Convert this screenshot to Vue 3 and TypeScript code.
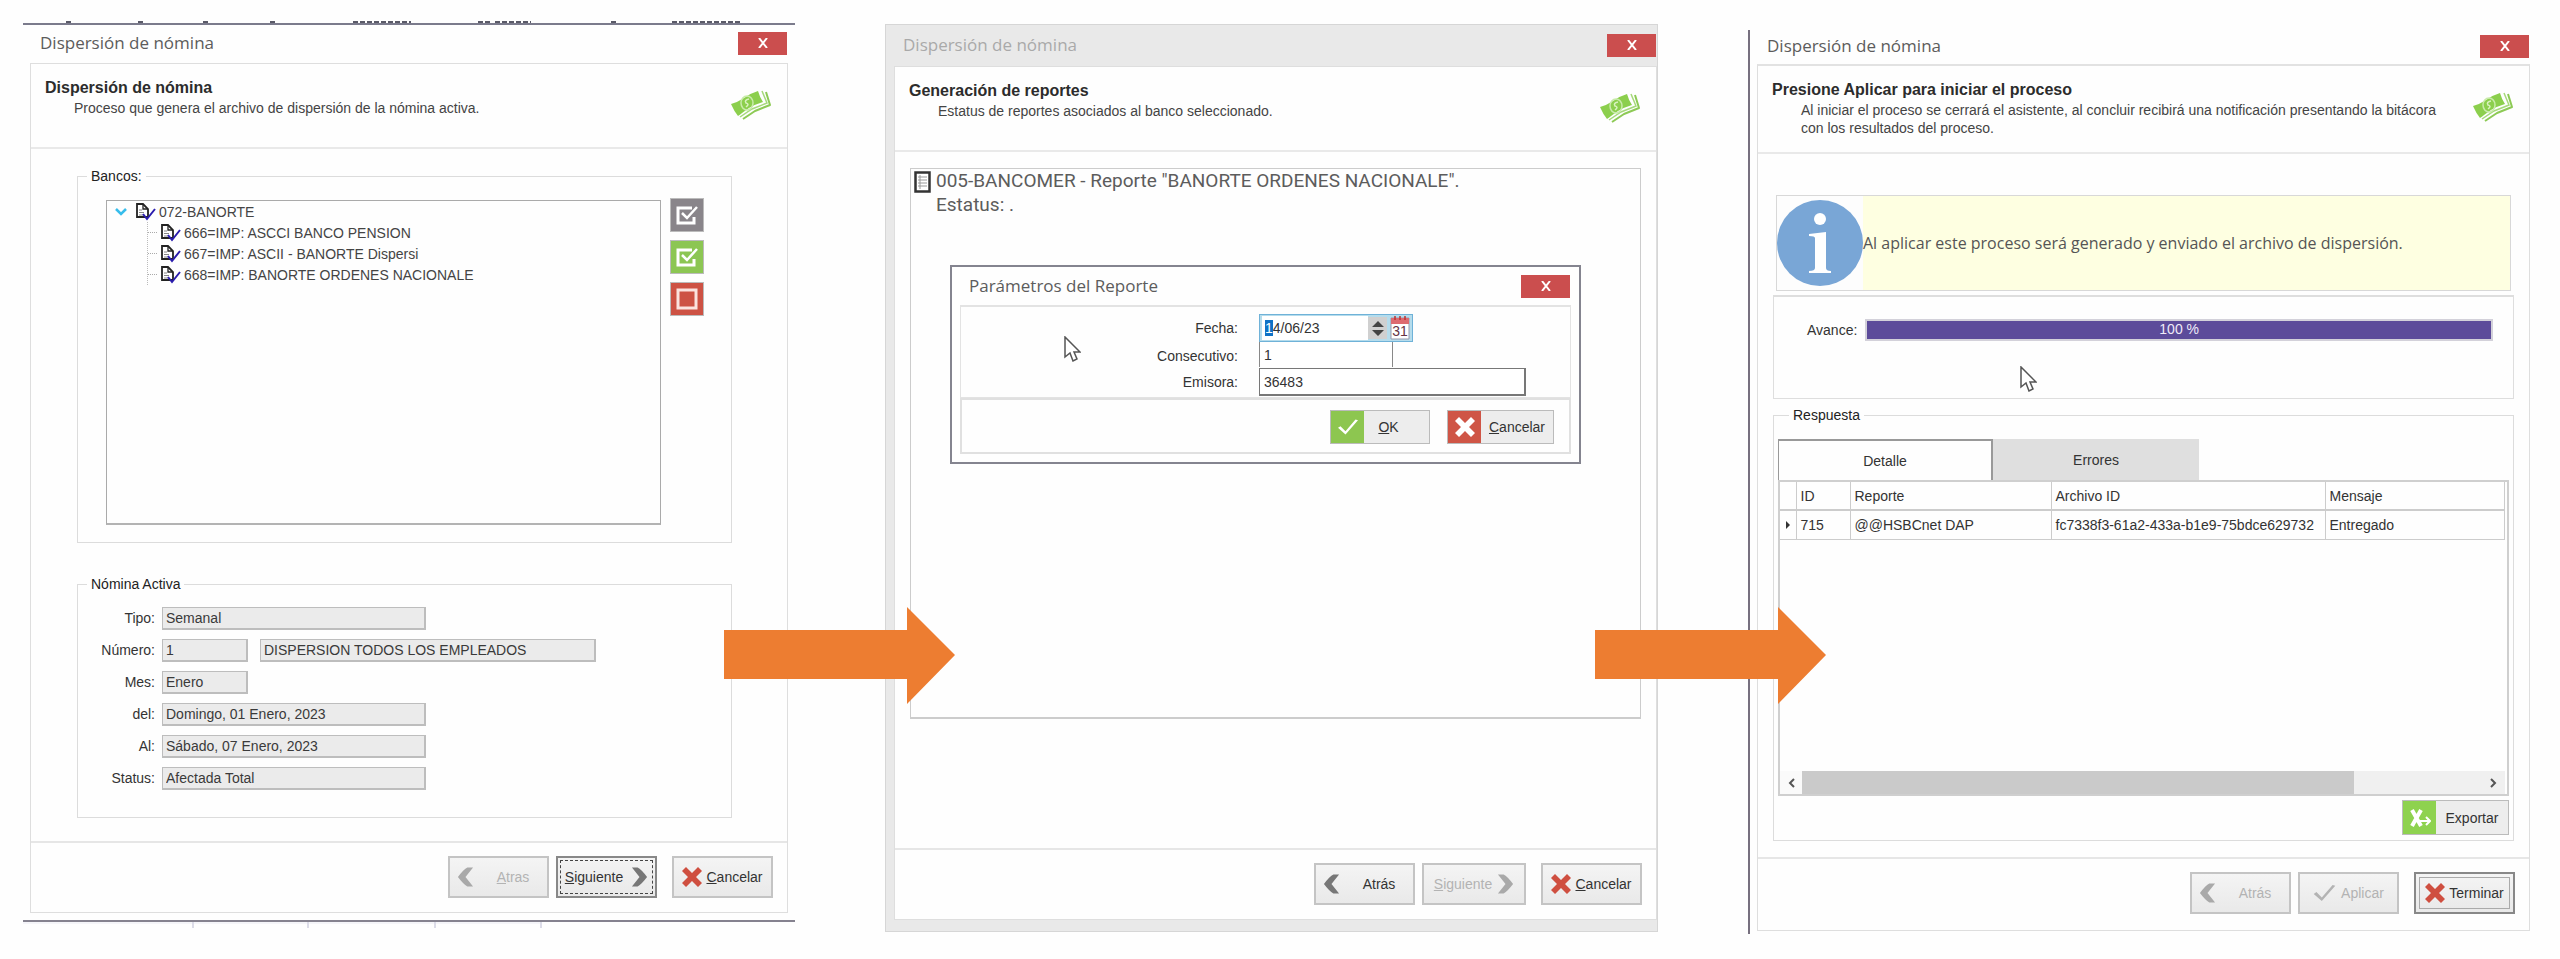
<script setup lang="ts">
import { onMounted, ref } from 'vue'

interface Field { id: string; label: string; value: string; short?: boolean; extra?: string }

const reports: string[] = [
  '666=IMP: ASCCI BANCO PENSION',
  '667=IMP: ASCII - BANORTE Dispersi',
  '668=IMP: BANORTE ORDENES NACIONALE',
]

const fields: Field[] = [
  { id: 'tipo', label: 'Tipo:', value: 'Semanal' },
  { id: 'numero', label: 'Número:', value: '1', short: true, extra: 'DISPERSION TODOS LOS EMPLEADOS' },
  { id: 'mes', label: 'Mes:', value: 'Enero', short: true },
  { id: 'del', label: 'del:', value: 'Domingo, 01 Enero, 2023' },
  { id: 'al', label: 'Al:', value: 'Sábado, 07 Enero, 2023' },
  { id: 'status', label: 'Status:', value: 'Afectada Total' },
]

const fecha = ref('14/06/23')
const consecutivo = ref('1')
const emisora = ref('36483')
const progress = 100
const dateInput = ref<HTMLInputElement | null>(null)

onMounted(() => {
  dateInput.value?.focus({ preventScroll: true })
  dateInput.value?.setSelectionRange(0, 1)
})
</script>

<template>
  <svg class="defs" width="0" height="0" aria-hidden="true">
    <symbol id="money" viewBox="0 0 42 30">
      <path d="M13 29 L25 21 L40 15 L36 2" fill="none" stroke="#8dca55" stroke-width="2" stroke-linejoin="round" />
      <path d="M10 27 L22 19 L37 13 L32 1" fill="none" stroke="#a6d97a" stroke-width="1.500" />
      <path d="M1 14 Q8 12 14 8 Q21 3 28 1 Q30 8 33 12 Q26 14 19 18 Q12 23 8 26 Q4 21 1 14 Z" fill="#8ccf4d" />
      <ellipse cx="17" cy="13" rx="6" ry="7" fill="none" stroke="#c9ebab" stroke-width="1.500" />
      <path d="M19 9 Q14 10 16 13 Q20 14 16 17" stroke="#d9f2bf" stroke-width="1.500" fill="none" />
    </symbol>
    <symbol id="doc" viewBox="0 0 21 20">
      <path d="M2 2 H8 L13 7 V15 H2 Z" fill="#fff" stroke="#222" stroke-width="1.8" />
      <path d="M8 2 V7 H13" fill="none" stroke="#222" stroke-width="1.3" />
      <path d="M4 8 H7 M4 10.500 H9 M4 13 H8" stroke="#888" stroke-width="1" />
      <path d="M8 12 L12 17 L20 7" fill="none" stroke="#2a1cae" stroke-width="2" />
    </symbol>
    <symbol id="boxcheck" viewBox="0 0 34 34">
      <path d="M22 10 H8 V25 H24 V19" fill="none" stroke="#fff" stroke-width="3" />
      <path d="M12 15 L17 20 L27 9" fill="none" stroke="#fff" stroke-width="2.500" />
    </symbol>
    <symbol id="boxempty" viewBox="0 0 34 34">
      <rect x="8" y="8" width="18" height="18" fill="none" stroke="#fbe3df" stroke-width="3" />
    </symbol>
    <symbol id="back" viewBox="0 0 18 20">
      <path d="M11 0 H17 L9 10 L17 20 H11 Q7 18 1 10 Q7 2 11 0 Z" fill="currentColor" />
    </symbol>
    <symbol id="next" viewBox="0 0 18 20">
      <path d="M7 0 H1 L9 10 L1 20 H7 Q11 18 17 10 Q11 2 7 0 Z" fill="currentColor" />
    </symbol>
    <symbol id="cross" viewBox="0 0 20 20">
      <path d="M4 0 L10 6 L16 0 L20 4 L14 10 L20 16 L16 20 L10 14 L4 20 L0 16 L6 10 L0 4 Z" fill="currentColor" />
    </symbol>
    <symbol id="tick" viewBox="0 0 24 20">
      <path d="M0 11 L3 9 L9 15 L21 1 L24 2 L9 19 Z" fill="currentColor" />
    </symbol>
    <symbol id="close" viewBox="0 0 10 10">
      <path d="M1 0 L9 10 M9 0 L1 10" stroke="currentColor" stroke-width="2" />
    </symbol>
    <symbol id="cursor" viewBox="0 0 17 26">
      <path d="M1 1 V21 L6 17 L9 25 L13 23 L10 16 H16 Z" fill="#fff" stroke="#555" stroke-width="1.500" />
    </symbol>
    <symbol id="flow" viewBox="0 0 231 97" preserveAspectRatio="none">
      <path d="M0 23 H183 V0 L231 48 L183 97 V72 H0 Z" fill="#ed7d31" />
    </symbol>
  </svg>

  <main class="page">
    <section class="window first">
      <svg class="scrap" viewBox="0 0 772 3" preserveAspectRatio="none" aria-hidden="true">
        <path d="M43 2 h6 M115 2 h6 M180 2 h6 M247 2 h6 M330 2 h58 M455 2 h14 M472 2 h36 M588 2 h6 M649 2 h68" stroke="#5a5a68" stroke-width="2" stroke-dasharray="5 2" />
      </svg>
      <header class="titlebar">
        <h1>Dispersión de nómina</h1>
        <button class="close" aria-label="Cerrar"><svg><use href="#close" /></svg></button>
      </header>
      <div class="frame">
        <div class="intro">
          <div class="intro-text">
            <h2>Dispersión de nómina</h2>
            <p>Proceso que genera el archivo de dispersión de la nómina activa.</p>
          </div>
          <svg class="money"><use href="#money" /></svg>
        </div>
        <div class="body">
          <fieldset>
            <legend>Bancos:</legend>
            <div class="banks">
              <div class="tree">
                <div class="node">
                  <svg class="chev" viewBox="0 0 12 8"><path d="M1 1 L6 6 L11 1" fill="none" stroke="#37bdec" stroke-width="2.500" /></svg>
                  <svg class="doc"><use href="#doc" /></svg>
                  <span>072-BANORTE</span>
                </div>
                <ul>
                  <li v-for="r in reports" :key="r"><svg class="doc"><use href="#doc" /></svg><span>{{ r }}</span></li>
                </ul>
              </div>
              <div class="tools">
                <button class="gray" aria-label="Invertir selección"><svg><use href="#boxcheck" /></svg></button>
                <button class="green" aria-label="Seleccionar todos"><svg><use href="#boxcheck" /></svg></button>
                <button class="red" aria-label="Quitar selección"><svg><use href="#boxempty" /></svg></button>
              </div>
            </div>
          </fieldset>
          <fieldset class="active">
            <legend>Nómina Activa</legend>
            <div class="details">
              <template v-for="f in fields" :key="f.id">
                <label :for="f.id">{{ f.label }}</label>
                <div class="values">
                  <input :id="f.id" :class="{ short: f.short }" :value="f.value" readonly />
                  <input v-if="f.extra" class="wide" :value="f.extra" aria-label="Descripción" readonly />
                </div>
              </template>
            </div>
          </fieldset>
        </div>
        <footer>
          <button class="btn" disabled><svg class="ic"><use href="#back" /></svg><span class="mid"><u>A</u>tras</span></button>
          <button class="btn focused"><span><u>S</u>iguiente</span><svg class="ic"><use href="#next" /></svg></button>
          <button class="btn last"><svg class="x"><use href="#cross" /></svg><span><u>C</u>ancelar</span></button>
        </footer>
      </div>
      <svg class="underticks" viewBox="0 0 772 6" preserveAspectRatio="none" aria-hidden="true">
        <path d="M0 1 H518" stroke="#ececf4" /><path d="M170 0 V6 M285 0 V6 M412 0 V6 M518 0 V6" stroke="#dcdce8" stroke-width="2" />
      </svg>
      <svg class="flow"><use href="#flow" /></svg>
    </section>

    <section class="window second">
      <header class="titlebar">
        <h1>Dispersión de nómina</h1>
        <button class="close" aria-label="Cerrar"><svg><use href="#close" /></svg></button>
      </header>
      <div class="frame">
        <div class="intro">
          <div class="intro-text">
            <h2>Generación de reportes</h2>
            <p>Estatus de reportes asociados al banco seleccionado.</p>
          </div>
          <svg class="money"><use href="#money" /></svg>
        </div>
        <div class="body">
          <div class="log">
            <svg class="sheet" viewBox="0 0 17 22">
              <rect x="1.500" y="1.500" width="14" height="19" fill="#fff" stroke="#333" stroke-width="2.500" />
              <path d="M4 6 H13 M4 9 H13 M4 12 H13 M4 15 H13 M6 4 V18" stroke="#999" />
            </svg>
            <div>005-BANCOMER - Reporte "BANORTE ORDENES NACIONALE".<br />Estatus: .</div>
            <div class="dialog" role="dialog" aria-label="Parámetros del Reporte">
              <header class="titlebar">
                <h1>Parámetros del Reporte</h1>
                <button class="close" aria-label="Cerrar"><svg><use href="#close" /></svg></button>
              </header>
              <div class="params">
                <label for="fecha">Fecha:</label>
                <div class="date">
                  <input id="fecha" ref="dateInput" v-model="fecha" />
                  <button class="spin" aria-label="Cambiar fecha"><svg viewBox="0 0 18 22"><path d="M3 10 L9 4 L15 10 Z M3 13 L9 19 L15 13 Z" fill="#444" /></svg></button>
                  <button class="cal" aria-label="Calendario">
                    <svg viewBox="0 0 20 24"><path d="M1 2 H19 V23 H1 Z" fill="#fff" stroke="#99a" /><path d="M1 2 H19 V8 H1 Z" fill="#dd6a70" /><path d="M5 0 V4 M10 0 V4 M15 0 V4" stroke="#b33" stroke-width="1.500" /></svg>
                    <span>31</span>
                  </button>
                </div>
                <label for="consecutivo">Consecutivo:</label>
                <input id="consecutivo" v-model="consecutivo" class="cons" />
                <label for="emisora">Emisora:</label>
                <input id="emisora" v-model="emisora" class="emi" />
              </div>
              <div class="actions">
                <button class="tile ok"><i><svg><use href="#tick" /></svg></i><span><u>O</u>K</span></button>
                <button class="tile no"><i><svg><use href="#cross" /></svg></i><span><u>C</u>ancelar</span></button>
              </div>
              <svg class="cursor"><use href="#cursor" /></svg>
            </div>
          </div>
        </div>
        <footer>
          <button class="btn"><svg class="ic"><use href="#back" /></svg><span class="mid">Atrás</span></button>
          <button class="btn forward" disabled><span><u>S</u>iguiente</span><svg class="ic"><use href="#next" /></svg></button>
          <button class="btn last"><svg class="x"><use href="#cross" /></svg><span><u>C</u>ancelar</span></button>
        </footer>
      </div>
      <svg class="flow"><use href="#flow" /></svg>
    </section>

    <section class="window third">
      <header class="titlebar">
        <h1>Dispersión de nómina</h1>
        <button class="close" aria-label="Cerrar"><svg><use href="#close" /></svg></button>
      </header>
      <div class="frame">
        <div class="intro">
          <div class="intro-text">
            <h2>Presione Aplicar para iniciar el proceso</h2>
            <p>Al iniciar el proceso se cerrará el asistente, al concluir recibirá una notificación presentando la bitácora con los resultados del proceso.</p>
          </div>
          <svg class="money"><use href="#money" /></svg>
        </div>
        <div class="body">
          <div class="notice">
            <div class="badge">
              <svg viewBox="0 0 86 86"><circle cx="43" cy="43" r="43" fill="#79a6d6" /><circle cx="43" cy="19" r="6" fill="#fff" /><path d="M32 34 L49 32 V68 Q49 71 54 71 V73 H32 V71 Q38 71 38 68 V38 Q38 36 32 36 Z" fill="#fff" /></svg>
            </div>
            <p>Al aplicar este proceso será generado y enviado el archivo de dispersión.</p>
          </div>
          <div class="advance">
            <span id="avance">Avance:</span>
            <div class="bar" role="progressbar" aria-labelledby="avance" :aria-valuenow="progress">
              <div class="fill" :style="{ width: progress + '%' }">{{ progress }} %</div>
            </div>
            <svg class="cursor"><use href="#cursor" /></svg>
          </div>
          <fieldset>
            <legend>Respuesta</legend>
            <div class="answer">
              <div class="tabs" role="tablist">
                <button role="tab" aria-selected="true" class="on">Detalle</button>
                <button role="tab" aria-selected="false">Errores</button>
              </div>
              <div class="grid">
                <table>
                  <colgroup><col class="c0" /><col class="c1" /><col class="c2" /><col class="c3" /><col /></colgroup>
                  <thead><tr><th></th><th>ID</th><th>Reporte</th><th>Archivo ID</th><th>Mensaje</th></tr></thead>
                  <tbody>
                    <tr>
                      <td class="mark"><svg viewBox="0 0 4 8"><path d="M0 0 L4 4 L0 8 Z" fill="#333" /></svg></td>
                      <td>715</td><td>@@HSBCnet DAP</td><td>fc7338f3-61a2-433a-b1e9-75bdce629732</td><td>Entregado</td>
                    </tr>
                  </tbody>
                </table>
                <div class="scroll">
                  <button aria-label="Desplazar a la izquierda"><svg viewBox="0 0 8 12"><path d="M7 2 L3 6 L7 10" fill="none" stroke="#555" stroke-width="2" /></svg></button>
                  <div class="track"><div class="thumb"></div></div>
                  <button aria-label="Desplazar a la derecha"><svg viewBox="0 0 8 12"><path d="M1 2 L5 6 L1 10" fill="none" stroke="#555" stroke-width="2" /></svg></button>
                </div>
              </div>
              <button class="tile export"><i><svg viewBox="0 0 22 20"><path d="M3 2 L12 18 M12 2 L3 18" stroke="#fff" stroke-width="4" /><path d="M11 13 H20 M17 9 L21 13 L17 17" fill="none" stroke="#fff" stroke-width="2" /></svg></i><span>Exportar</span></button>
            </div>
          </fieldset>
        </div>
        <footer>
          <button class="btn" disabled><svg class="ic"><use href="#back" /></svg><span class="mid">Atrás</span></button>
          <button class="btn" disabled><svg class="tk"><use href="#tick" /></svg><span>Aplicar</span></button>
          <button class="btn last default"><svg class="x"><use href="#cross" /></svg><span>Terminar</span></button>
        </footer>
      </div>
    </section>
  </main>
</template>

<style>
body { margin: 0; background: #fefefe; }
</style>

<style scoped>
* { box-sizing: border-box; }
.defs { position: absolute; }
.page {
  display: grid;
  grid-template-columns: 772fr 773fr 782fr;
  column-gap: 90px;
  align-items: start;
  padding: 23px 30px 25px 23px;
  font: 14px/20px "Liberation Sans", Arial, sans-serif;
  color: #333;
}
button, input { font: inherit; color: inherit; margin: 0; padding: 0; border: 0; border-radius: 0; }
button { display: flex; align-items: center; justify-content: center; }
svg { display: block; flex: none; }
h1, h2, p, ul { margin: 0; padding: 0; }
.window { position: relative; min-width: 0; }
.titlebar { display: flex; align-items: center; justify-content: space-between; }
.titlebar h1 { font: 400 17px/24px "Open Sans", sans-serif; color: #5c5c5c; }
.close { width: 49px; height: 23px; background: #cb4e4e; color: #fff; }
.close svg { width: 10px; height: 10px; }
.frame { border: 1px solid #dedede; background: #fefefe; }
.intro { display: flex; justify-content: space-between; border-bottom: 2px solid #e9e9e9; }
.intro-text { padding: 14px 0 0 14px; }
.intro h2 { font: 700 16px/20px "Liberation Sans", Arial, sans-serif; color: #2c2c2c; }
.intro p { padding-left: 29px; line-height: 18px; margin-top: 1px; color: #444; }
.money { width: 42px; height: 30px; margin: 26px 15px 0 0; }
footer { display: flex; justify-content: flex-end; gap: 7px; padding: 13px 14px 14px 0; border-top: 2px solid #e6e6e6; }

.first { border-top: 2px solid #7b7b8c; border-bottom: 2px solid #85828f; }
.first .titlebar { height: 38px; padding: 0 8px 2px 17px; }
.first .frame { margin: 0 7px 7px; }
.first .intro { height: 85px; }
.first .body { padding: 17px 55px 23px 46px; }
.second { margin-top: 1px; background: #e9e9e9; border: 1px solid #d6d6d6; }
.second > .titlebar { height: 41px; padding: 0 1px 1px 17px; }
.second > .titlebar h1 { color: #a9a9a9; }
.second .frame { margin: 0 0 11px 8px; }
.second .intro { height: 85px; }
.second .body { padding: 16px 15px 129px; }
.third { margin-top: 7px; border-left: 2px solid #77707f; padding-bottom: 3px; }
.third .titlebar { height: 34px; padding: 0 1px 2px 17px; }
.third .frame { margin-left: 7px; border-top: 2px solid #e2e2e2; }
.third .intro { height: 88px; }
.third .intro-text { flex: 1; max-width: 704px; }
.third .body { padding: 41px 15px 16px; }
.third footer { padding-bottom: 16px; }

.scrap { position: absolute; left: 0; top: -5px; width: 100%; height: 3px; }
.underticks { position: absolute; left: 0; top: 100%; width: 100%; height: 6px; margin-top: 2px; }
.flow { position: absolute; right: -160px; top: 582px; width: 231px; height: 97px; z-index: 3; }
.second .flow { right: -169px; }

fieldset { position: relative; min-width: 0; margin: 0; padding: 0; border: 1px solid #dcdcdc; }
legend { margin-left: 9px; padding: 0 4px; line-height: 20px; color: #222; }
.active { margin-top: 31px; }
.banks { display: flex; gap: 9px; padding: 12px 27px 17px 28px; }
.tree { flex: 1; min-height: 325px; margin-top: 2px; border: 1px solid #aaa; border-bottom: 2px solid #b3b3b3; color: #444; }
.node, .tree li { display: flex; align-items: center; height: 21px; gap: 3px; }
.node { padding-left: 8px; }
.chev { width: 12px; height: 8px; margin-right: 5px; }
.doc { width: 21px; height: 20px; }
.tree ul { margin-left: 40px; border-left: 1px dotted #bbb; list-style: none; }
.tree li::before { content: ""; width: 9px; border-top: 1px dotted #aaa; }
.tools { display: flex; flex-direction: column; gap: 8px; }
.tools button { width: 34px; height: 34px; border: 1px solid #bbb; }
.tools svg { width: 34px; height: 34px; }
.gray { background: #89858a; }
.green { background: #8cc653; }
.red { background: #cd5244; }

.details { display: grid; grid-template-columns: 77px 1fr; gap: 9px 7px; padding: 13px 0 27px; }
.details label { text-align: right; line-height: 23px; }
.values { display: flex; gap: 12px; }
.values input { width: 264px; height: 23px; padding: 0 3px; border: 2px solid #bdbdbd; border-width: 1px 2px 2px 1px; background: #ebebeb; color: #3a3a3a; }
.values .short { width: 86px; }
.values .wide { width: 336px; }

.btn { gap: 5px; width: 101px; height: 42px; border: 2px solid #c4c4c4; background: linear-gradient(#f4f4f4, #e9e9e9); color: #333; }
.btn .ic { width: 17px; height: 20px; color: #777; }
.btn .mid { flex: 1; text-align: center; }
.btn > .ic:first-child { margin-left: 7px; }
.btn .tk { width: 23px; height: 18px; }
.btn .x { width: 20px; height: 20px; color: #cf4f40; }
.btn:disabled { color: #b3b3b3; }
.btn:disabled .ic { color: #a9a9a9; }
.btn.last { margin-left: 8px; gap: 4px; }
.forward { width: 104px; }
.btn.focused { position: relative; gap: 8px; border-color: #888; }
.btn.focused::after { content: ""; position: absolute; inset: 2px; border: 1px dashed #444; }
.default { border: 2px solid #888; outline: 1px solid #aaa; outline-offset: -6px; }

.log { position: relative; display: flex; gap: 5px; min-height: 551px; padding: 0 3px; border: 1px solid #ccc; border-bottom-width: 2px; font: 400 19px/24px Roboto, sans-serif; color: #5c5c5c; }
.sheet { width: 17px; height: 22px; margin-top: 2px; }
.dialog { position: absolute; left: 39px; right: 59px; top: 96px; border: 2px solid #84848f; background: #fefefe; font: 14px/20px "Liberation Sans", Arial, sans-serif; color: #333; }
.dialog .titlebar { height: 38px; padding: 0 9px 0 17px; }
.params { display: grid; grid-template-columns: 277px 1fr; column-gap: 21px; margin: 0 8px; height: 93px; padding-top: 7px; border: 1px solid #e3e3e3; border-top-width: 2px; align-content: start; }
.params label { text-align: right; line-height: 26px; padding-top: 1px; height: 26px; }
.params input { height: 26px; padding: 0 4px; background: #fff; outline: 0; }
.date { display: flex; align-items: center; width: 154px; height: 28px; padding: 2px; border: 1px solid #6fb2d8; background: #b5dcec; }
.date input { flex: 1; min-width: 0; height: 24px; padding: 0 3px; }
.date input::selection { background: #1072c6; color: #fff; }
.spin { width: 19px; height: 22px; background: #d0d0d0; }
.spin svg { width: 18px; height: 22px; }
.cal { position: relative; width: 20px; height: 24px; margin-left: 3px; background: none; }
.cal svg { width: 20px; height: 24px; }
.cal span { position: absolute; left: 0; right: 0; top: 6px; font-size: 14px; line-height: 18px; text-align: center; color: #634; }
.params .cons { width: 134px; height: 25px; border: 1px solid #888; border-width: 0 1px 0 1px; }
.params .emi { width: 267px; height: 28px; border: 2px solid #777; border-width: 1px 2px 2px 1px; }
.actions { display: flex; justify-content: flex-end; gap: 17px; margin: 0 8px 8px; padding: 10px 15px 8px; border: 2px solid #e0e0e0; }
.tile { height: 34px; justify-content: stretch; border: 1px solid #bbb; background: #ededed; }
.tile i { display: grid; place-items: center; width: 33px; height: 100%; background: #8dc650; color: #fff; }
.tile span { flex: 1; text-align: center; }
.tile svg { width: 20px; height: 20px; }
.ok { width: 100px; }
.ok span { padding-right: 16px; }
.no { width: 107px; }
.no i { background: #cf5546; }
.cursor { position: absolute; left: 112px; top: 69px; width: 17px; height: 26px; }

.notice { display: flex; align-items: center; min-height: 96px; margin: 0 3px; border: 1px solid #d8d8d8; background: #feffe1; }
.badge { align-self: stretch; display: flex; align-items: center; background: #fdfdfd; }
.badge svg { width: 86px; height: 86px; }
.notice p { font: 400 16px/22px "Open Sans", sans-serif; color: #555; }
.advance { position: relative; display: flex; align-items: flex-start; gap: 8px; min-height: 104px; margin-top: 4px; padding: 22px 20px 0 33px; border: 1px solid #dedede; border-top-width: 2px; }
.advance > span { line-height: 22px; }
.advance .cursor { left: 246px; top: 69px; }
.bar { flex: 1; height: 22px; border: 2px solid #d3d1da; }
.fill { height: 18px; background: #5c4b9a; color: #eeeaf8; text-align: center; line-height: 17px; }
.third fieldset { margin-top: 6px; }
.third legend { margin-left: 15px; }
.answer { display: flex; flex-direction: column; padding: 14px 4px 5px; }
.tabs { display: flex; }
.tabs button { width: 206px; height: 41px; background: #dfdfdf; }
.tabs .on { width: 215px; background: #fefefe; border: 2px solid #999; border-width: 2px 2px 0 1px; }
.grid { display: flex; flex-direction: column; min-height: 316px; padding-right: 2px; border: 2px solid #cfcfcf; }
table { width: 100%; table-layout: fixed; border-collapse: collapse; }
.c0 { width: 16px; }
.c1 { width: 54px; }
.c2 { width: 201px; }
.c3 { width: 274px; }
th, td { height: 29px; padding: 0 0 0 4px; border: 1px solid #ccc; border-top: 0; border-left: 0; text-align: left; font-weight: 400; white-space: nowrap; }
th { height: 28px; border-bottom-width: 2px; }
.mark svg { width: 4px; height: 8px; margin-left: 2px; }
.scroll { display: flex; height: 23px; margin-top: auto; background: #f0f0f0; }
.scroll button { width: 22px; background: #fafafa; }
.scroll button:last-child { background: #f0f0f0; }
.scroll svg { width: 8px; height: 12px; }
.track { flex: 1; }
.thumb { width: 81%; height: 100%; background: #cacaca; }
.export { width: 107px; height: 35px; margin-top: 4px; align-self: flex-end; }
.export i { background: #8ed24f; }
.export svg { width: 22px; }
</style>
